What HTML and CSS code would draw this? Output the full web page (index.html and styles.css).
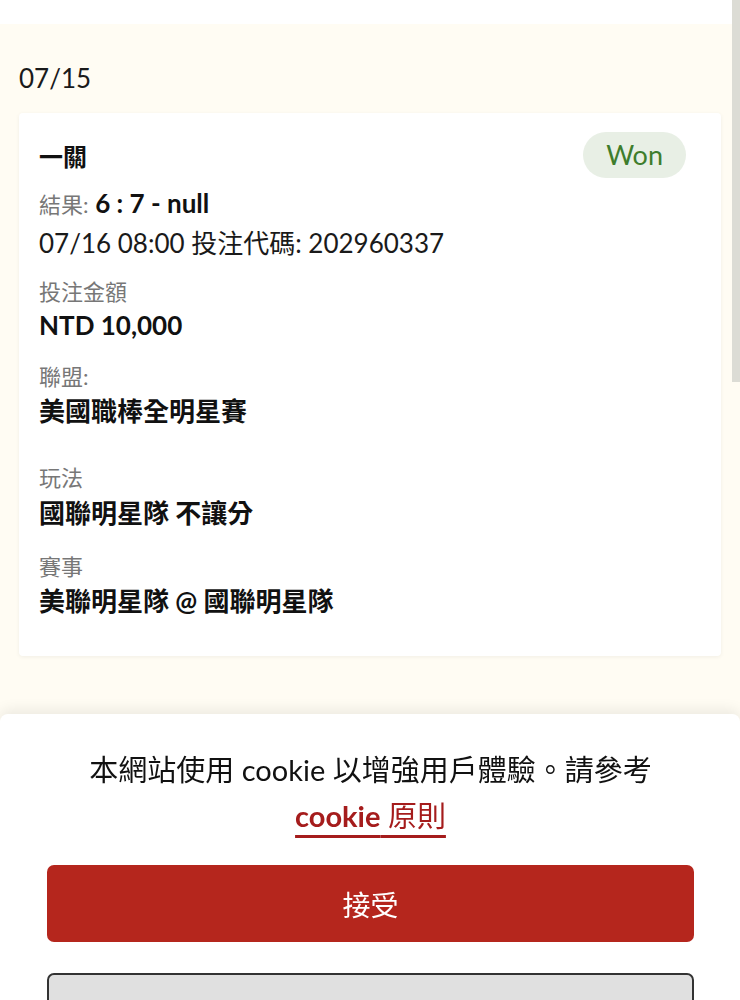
FILE: index.html
```html
<!DOCTYPE html>
<html lang="zh-Hant">
<head>
<meta charset="utf-8">
<title>投注紀錄</title>
<link rel="stylesheet" href="styles.css">
</head>
<body>
<div class="topbar"></div>
<main class="content">
  <h2 class="date">07/15</h2>
  <section class="card">
    <div class="card-head">
      <h3 class="title">一關</h3>
      <span class="badge">Won</span>
    </div>
    <p class="line result"><span class="label">結果:</span> <b class="strong">6 : 7 - null</b></p>
    <p class="line regular">07/16 08:00 投注代碼: 202960337</p>
    <div class="field first">
      <div class="label">投注金額</div>
      <div class="value">NTD 10,000</div>
    </div>
    <div class="field">
      <div class="label">聯盟:</div>
      <div class="value">美國職棒全明星賽</div>
    </div>
    <div class="field wide">
      <div class="label">玩法</div>
      <div class="value">國聯明星隊 不讓分</div>
    </div>
    <div class="field last">
      <div class="label">賽事</div>
      <div class="value">美聯明星隊 @ 國聯明星隊</div>
    </div>
  </section>
</main>
<div class="cookie">
  <p class="cookie-text">本網站使用 cookie 以增強用戶體驗。請參考<br><a class="cookie-link" href="#"><b>cookie</b> 原則</a></p>
  <button class="btn accept">接受</button>
  <button class="btn other"></button>
</div>
<div class="scroll-thumb"></div>
</body>
</html>
```
FILE: styles.css
```css
html, body {
  margin: 0;
  padding: 0;
  height: 100%;
  overflow: hidden;
}
body {
  background: #fffcf3;
  font-family: Lato, "Noto Sans CJK TC", sans-serif;
  color: #111;
}
.topbar {
  height: 24px;
  background: #fff;
}
.content {
  padding: 0 19px;
}
.date {
  margin: 0;
  padding-top: 38px;
  height: 51px;
  font-size: 26px;
  font-weight: 400;
  line-height: 32px;
  color: #1a1a1a;
}
.card {
  background: #fff;
  border-radius: 4px;
  box-shadow: 0 1px 4px rgba(0,0,0,0.06);
  padding: 19px 20px 36px;
}
.card-head {
  display: flex;
  justify-content: space-between;
  align-items: center;
  height: 46px;
}
.title {
  margin: 0;
  font-size: 24px;
  font-weight: 700;
}
.badge {
  background: #e8efe5;
  color: #3e7d2c;
  font-size: 27px;
  border-radius: 23px;
  height: 46px;
  line-height: 46px;
  padding: 0 23px;
  margin-right: 15px;
}
.line {
  margin: 0;
  font-size: 26px;
  line-height: 36px;
}
.line.result {
  margin-top: 5px;
  line-height: 40px;
}
.label {
  color: #777;
  font-size: 22px;
}
.strong {
  font-weight: 700;
}
.regular {
  color: #1a1a1a;
}
.field {
  margin-top: 16px;
}
.field .label {
  line-height: 30px;
}
.field .value {
  font-size: 26px;
  font-weight: 700;
  line-height: 38px;
}
.field.first .value {
  line-height: 36px;
}
.field.first + .field {
  margin-top: 19px;
}
.field.wide {
  margin-top: 33px;
}
.field.wide .value {
  line-height: 41px;
}
.field.last {
  margin-top: 18px;
}
.cookie {
  position: fixed;
  left: 0;
  right: 0;
  top: 714px;
  bottom: 0;
  background: #fff;
  border-radius: 8px 8px 0 0;
  box-shadow: 0 -4px 14px rgba(0,0,0,0.08);
  padding: 33px 46px 0 47px;
  display: flex;
  flex-direction: column;
}
.cookie-text {
  margin: 0 0 26px;
  text-align: center;
  font-size: 29px;
  line-height: 46px;
  color: #111;
}
.cookie-link {
  color: #a51c1c;
  text-decoration: underline;
  text-decoration-thickness: 3px;
  text-underline-offset: 8px;
}
.btn {
  display: block;
  width: 100%;
  height: 77px;
  border-radius: 7px;
  font-family: Lato, "Noto Sans CJK TC", sans-serif;
  font-size: 28px;
  flex-shrink: 0;
}
.accept {
  background: #b5261d;
  color: #fff;
  border: none;
  margin-bottom: 31px;
}
.other {
  background: #e0e0e0;
  border: 2px solid #333;
}
.scroll-thumb {
  position: fixed;
  right: 0;
  top: 0;
  width: 8px;
  height: 382px;
  background: #dcdcd5;
}
```
